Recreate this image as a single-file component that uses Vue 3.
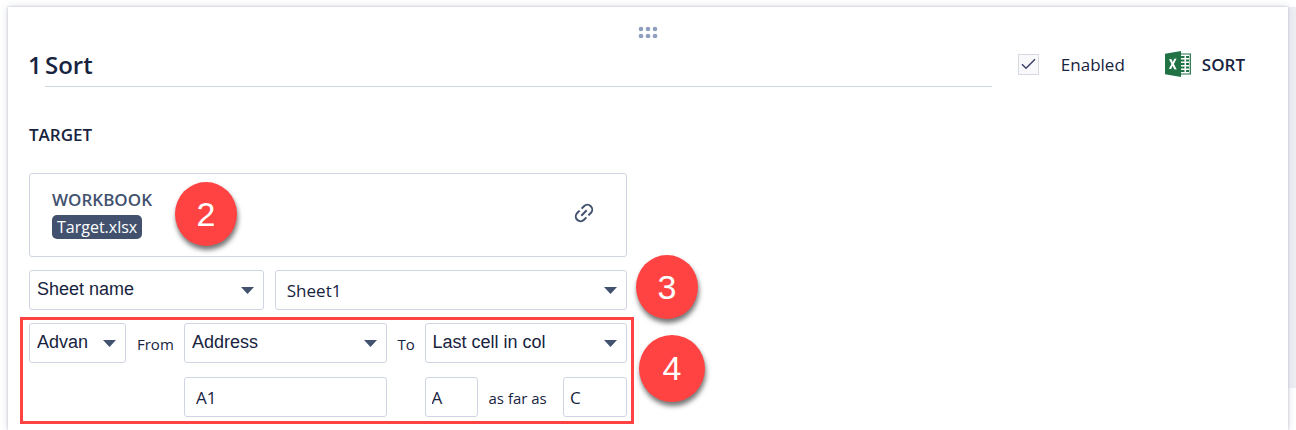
<template>
  <div class="page">
    <div class="track"></div>
    <section class="card">
      <button class="handle" type="button" aria-label="Move">
        <svg width="20" height="12" viewBox="0 0 20 12">
          <circle v-for="dot in dots" :key="dot.id" :cx="dot.x" :cy="dot.y" r="2.3" />
        </svg>
      </button>

      <header class="header">
        <label class="number" for="title">1</label>
        <input id="title" v-model="title" class="title" type="text" />
        <label class="enabled">
          <span class="check">
            <input v-model="enabled" type="checkbox" />
            <svg v-if="enabled" width="15" height="12" viewBox="0 0 15 12">
              <path d="M1 6.2 5 10.2 14 1.2" />
            </svg>
          </span>
          Enabled
        </label>
        <div class="kind">
          <svg width="26" height="26" viewBox="0 0 26 26">
            <path d="M14 3h11.3v20H14z" fill="#fff" stroke="#217346" stroke-width="1.2" />
            <path
              d="M16 6h3.5M21 6h3M16 9.5h3.5M21 9.5h3M16 13h3.5M21 13h3M16 16.5h3.5M21 16.5h3M16 20h3.5M21 20h3"
              stroke="#217346"
              stroke-width="2"
            />
            <path d="M0 2.8 16 0v26L0 23.2z" fill="#217346" />
            <path
              d="m4 8.2 2.4-.2 1.3 3.2L9.3 7.8l2.3-.2-2.7 5.4 2.8 5.4-2.5-.2-1.6-3.5-1.5 3.3-2.2-.2 2.6-4.8z"
              fill="#fff"
            />
          </svg>
          <span>SORT</span>
        </div>
      </header>

      <div class="form">
        <h2>TARGET</h2>

        <div class="workbook">
          <div class="file">
            <span class="caption">WORKBOOK</span>
            <span class="chip">Target.xlsx</span>
          </div>
          <button class="link" type="button" aria-label="Link">
            <svg width="20" height="20" viewBox="0 0 20 20">
              <g transform="rotate(-45 10 10)">
                <path d="M8.6 5.2H5.2a4.8 4.8 0 0 0 0 9.6h3.4M11.4 5.2h3.4a4.8 4.8 0 0 1 0 9.6h-3.4M6.2 10h7.6" />
              </g>
            </svg>
          </button>
          <span class="badge badge-two">2</span>
        </div>

        <div class="sheet">
          <span class="select">
            <select aria-label="Sheet name">
              <option>Sheet name</option>
            </select>
            <svg width="13" height="7" viewBox="0 0 13 7"><path d="M0 0h13L6.5 7z" /></svg>
          </span>
          <span class="select value">
            <select aria-label="Sheet">
              <option>Sheet1</option>
            </select>
            <svg width="13" height="7" viewBox="0 0 13 7"><path d="M0 0h13L6.5 7z" /></svg>
          </span>
          <span class="badge badge-three">3</span>
        </div>

        <div class="range">
          <span class="select">
            <select aria-label="Range type">
              <option>Advan</option>
            </select>
            <svg width="13" height="7" viewBox="0 0 13 7"><path d="M0 0h13L6.5 7z" /></svg>
          </span>
          <label for="from">From</label>
          <span class="select">
            <select id="from">
              <option>Address</option>
            </select>
            <svg width="13" height="7" viewBox="0 0 13 7"><path d="M0 0h13L6.5 7z" /></svg>
          </span>
          <label for="to">To</label>
          <span class="select">
            <select id="to">
              <option>Last cell in col</option>
            </select>
            <svg width="13" height="7" viewBox="0 0 13 7"><path d="M0 0h13L6.5 7z" /></svg>
          </span>
          <input v-model="address" class="box address" type="text" aria-label="Address" />
          <div class="columns">
            <input v-model="firstColumn" class="box" type="text" aria-label="Column" />
            <label for="last">as far as</label>
            <input id="last" v-model="lastColumn" class="box" type="text" />
          </div>
          <span class="frame"></span>
          <span class="badge badge-four">4</span>
        </div>
      </div>
    </section>
  </div>
</template>

<script setup>
import { ref } from 'vue';

const title = ref('Sort');
const enabled = ref(true);
const address = ref('A1');
const firstColumn = ref('A');
const lastColumn = ref('C');

const dots = [0, 1, 2, 3, 4, 5].map((id) => ({
  id,
  x: 3 + (id % 3) * 7,
  y: 3 + Math.floor(id / 3) * 7
}));
</script>

<style>
body {
  background: #fff;
}
</style>

<style scoped>
.page {
  --ink: #172340;
  --slate: #42526e;
  --line: #d0d5e3;
  --red: #ff4343;
  position: relative;
  box-sizing: border-box;
  min-height: 100vh;
  padding: 7px 8px 0;
  display: flex;
  overflow: hidden;
  color: var(--ink);
  font-family: "Open Sans", "Noto Sans", sans-serif;
  font-size: 17px;
}

input,
select,
button {
  box-sizing: border-box;
  min-width: 0;
  margin: 0;
  color: inherit;
  font: inherit;
}

button {
  padding: 0;
  border: none;
  background: none;
  cursor: pointer;
}

.track {
  position: absolute;
  top: 7px;
  right: 0;
  bottom: 42px;
  width: 8px;
  background: #ededf3;
}

.card {
  position: relative;
  flex: 1;
  min-width: 0;
  background: #fff;
  box-shadow: 0 0 2px #b4b9c8, 0 0 8px #d9dbe4;
}

.handle {
  display: block;
  margin: 19px auto 0;
  height: 12px;
}

.handle svg {
  display: block;
  fill: #8f9fbd;
}

.header {
  display: flex;
  align-items: center;
  margin-top: 6px;
  padding: 0 43px 0 20px;
}

.number,
.title {
  padding: 0 0 2px;
  font-size: 24px;
  font-weight: 600;
}

.number {
  width: 17px;
}

.title {
  flex: 1;
  height: 43px;
  border: none;
  border-bottom: 1px solid var(--line);
  background: none;
  outline: none;
}

.enabled {
  display: flex;
  align-items: center;
  gap: 22px;
  margin-left: 26px;
  padding-bottom: 3px;
}

.check {
  display: grid;
  place-items: center;
}

.check input {
  grid-area: 1 / 1;
  width: 21px;
  height: 21px;
  appearance: none;
  border: 1px solid #d8d9de;
  background: #f9f9fb;
}

.check svg {
  grid-area: 1 / 1;
  fill: none;
  stroke: #3c4268;
  stroke-width: 1.5;
  pointer-events: none;
}

.kind {
  display: flex;
  align-items: center;
  gap: 11px;
  margin-left: 40px;
  padding-bottom: 3px;
  font-weight: 600;
}

.form {
  box-sizing: border-box;
  width: calc(50% - 21px);
  padding-left: 21px;
}

h2 {
  margin: 36px 0 0;
  font-size: 17px;
  font-weight: 600;
  line-height: 24px;
}

.workbook {
  position: relative;
  display: flex;
  align-items: center;
  justify-content: space-between;
  box-sizing: border-box;
  height: 84px;
  margin-top: 26px;
  padding: 0 32px 4px 22px;
  border: 1px solid var(--line);
  border-radius: 3px;
}

.file {
  display: flex;
  flex-direction: column;
  align-items: flex-start;
  gap: 3px;
}

.caption {
  color: var(--slate);
  font-weight: 600;
  line-height: 24px;
}

.chip {
  padding: 0 5px;
  border-radius: 5px;
  background: var(--slate);
  color: #fff;
  font-size: 16px;
  line-height: 24px;
}

.link svg {
  display: block;
  fill: none;
  stroke: var(--slate);
  stroke-width: 2;
}

.sheet {
  position: relative;
  display: grid;
  grid-template-columns: 2fr 3fr;
  gap: 11px;
  margin-top: 13px;
}

.select {
  display: grid;
  align-items: center;
  min-width: 0;
}

.select select {
  grid-area: 1 / 1;
  width: 100%;
  height: 40px;
  padding: 0 28px 2px 7px;
  appearance: none;
  border: 1px solid var(--line);
  border-radius: 3px;
  background: #fff;
  font-family: "Liberation Sans", sans-serif;
  font-size: 18px;
}

.select svg {
  grid-area: 1 / 1;
  justify-self: end;
  margin-right: 10px;
  fill: var(--slate);
  pointer-events: none;
}

.value select {
  padding: 0 28px 0 11px;
  font-family: inherit;
  font-size: 17px;
}

.range {
  position: relative;
  display: grid;
  grid-template-columns: 97px 36px minmax(0, 1fr) 16px minmax(0, 1fr);
  align-items: center;
  gap: 14px 11px;
  margin-top: 13px;
}

.range label {
  padding-top: 2px;
  font-size: 15px;
  white-space: nowrap;
}

.box {
  width: 100%;
  height: 40px;
  padding: 0 6px;
  border: 1px solid var(--line);
  border-radius: 3px;
  background: #fff;
}

.address {
  grid-column: 3;
  padding: 0 11px;
}

.columns {
  grid-column: 5;
  display: grid;
  grid-template-columns: 53px 1fr 64px;
  align-items: center;
  gap: 11px;
}

.frame {
  position: absolute;
  inset: -6px -7px -7px -9px;
  border: 3px solid var(--red);
  pointer-events: none;
}

.badge {
  position: absolute;
  display: flex;
  align-items: center;
  justify-content: center;
  width: 62px;
  height: 64px;
  border-radius: 50%;
  background: var(--red);
  box-shadow: 1px 4px 5px rgba(0, 0, 0, 0.55);
  color: #fff;
  font-family: "Liberation Sans", sans-serif;
  font-size: 34px;
}

.badge-two {
  top: 8px;
  left: 145px;
}

.badge-three {
  top: -15px;
  left: calc(100% + 9px);
}

.badge-four {
  top: 12px;
  left: calc(100% + 12px);
  width: 66px;
  height: 67px;
}
</style>
